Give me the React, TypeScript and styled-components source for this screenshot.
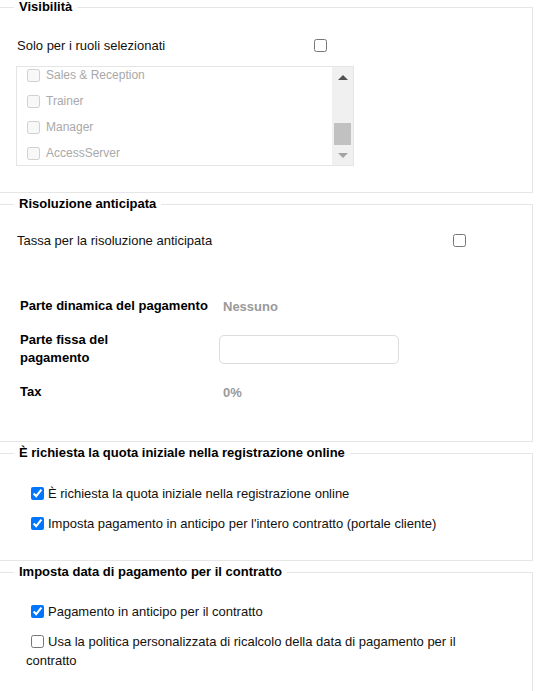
import React from "react"
import styled, { createGlobalStyle } from "styled-components"

const GlobalStyle = createGlobalStyle`
    html, body {
        margin: 0;
        padding: 0;
        background: #fff;
    }
    body {
        font-family: "Liberation Sans", Arial, sans-serif;
        font-size: 13px;
        color: #111;
    }
`

const Page = styled.div`
    width: 533px;
`

const Fieldset = styled.fieldset<{ $pb?: number }>`
    margin: 0 0 4px 0;
    padding: 0 0 ${p => p.$pb ?? 20}px 0;
    border: 1px solid #e6e6e6;
    border-left: none;
    min-width: 0;
`

const Legend = styled.legend`
    margin-left: 14px;
    padding: 0 5px;
    font-weight: bold;
    font-size: 13px;
    line-height: 14px;
    color: #000;
`

const Checkbox = styled.input.attrs({ type: "checkbox" })`
    width: 13px;
    height: 13px;
    margin: 0;
`

const ToggleRow = styled.div<{ $mt: number; $labelWidth: number }>`
    display: flex;
    align-items: center;
    height: 20px;
    margin-top: ${p => p.$mt}px;
    padding-left: 17px;

    & > span {
        width: ${p => p.$labelWidth}px;
        color: #111;
    }
`

const ListBox = styled.div`
    display: flex;
    margin: 11px 0 0 16px;
    width: 336px;
    height: 98px;
    border: 1px solid #e5e5e5;
    overflow: hidden;
`

const ListItems = styled.div`
    flex: 1;
    margin-top: -5px;
    padding-left: 10px;
`

const ListItem = styled.label`
    display: flex;
    align-items: center;
    gap: 6px;
    height: 26px;
    font-size: 12px;
    color: #a9a9a9;
`

const Scrollbar = styled.div`
    display: flex;
    flex-direction: column;
    width: 21px;
    background: #f0f0f0;
`

const ScrollButton = styled.div<{ $down?: boolean }>`
    height: 20px;
    display: flex;
    align-items: center;
    justify-content: center;

    &::before {
        content: "";
        width: 0;
        height: 0;
        border-left: 5px solid transparent;
        border-right: 5px solid transparent;
        ${p => p.$down
            ? "border-top: 5px solid #a3a3a3;"
            : "border-bottom: 5px solid #505050;"}
    }
`

const ScrollSpacer = styled.div`
    flex: 1;
`

const ScrollThumb = styled.div`
    height: 22px;
    margin: 0 2px;
    background: #c1c1c1;
`

const DetailGrid = styled.div`
    display: grid;
    grid-template-columns: 199px 180px;
    row-gap: 15px;
    align-items: center;
    margin-top: 46px;
    padding-left: 20px;
`

const DetailLabel = styled.div<{ $narrow?: boolean }>`
    min-height: 20px;
    display: flex;
    align-items: center;
    font-weight: bold;
    line-height: 18px;
    color: #000;
    max-width: ${p => (p.$narrow ? "125px" : "none")};
`

const DetailValue = styled.div`
    padding-left: 4px;
    font-weight: bold;
    color: #9a9a9a;
`

const TextInput = styled.input`
    box-sizing: border-box;
    width: 180px;
    height: 29px;
    border: 1px solid #dcdcdc;
    border-radius: 5px;
    outline: none;
`

const CheckList = styled.div<{ $mt: number }>`
    display: flex;
    flex-direction: column;
    gap: 11px;
    margin-top: ${p => p.$mt}px;
    padding-left: 26px;
    max-width: 464px;
`

const CheckLine = styled.label`
    display: block;
    line-height: 19px;
    color: #111;

    & > input {
        margin: 0 4px 0 5px;
        vertical-align: -2px;
    }
`

const roles = ["Sales & Reception", "Trainer", "Manager", "AccessServer"]

const App = () => {
    return <Page>
        <GlobalStyle />

        <Fieldset $pb={26}>
            <Legend>Visibilità</Legend>
            <ToggleRow $mt={21} $labelWidth={297}>
                <span>Solo per i ruoli selezionati</span>
                <Checkbox />
            </ToggleRow>
            <ListBox>
                <ListItems>
                    {roles.map(r => <ListItem key={r}>
                        <Checkbox disabled />
                        {r}
                    </ListItem>)}
                </ListItems>
                <Scrollbar>
                    <ScrollButton />
                    <ScrollSpacer />
                    <ScrollThumb />
                    <ScrollButton $down />
                </Scrollbar>
            </ListBox>
        </Fieldset>

        <Fieldset $pb={39}>
            <Legend>Risoluzione anticipata</Legend>
            <ToggleRow $mt={19} $labelWidth={436}>
                <span>Tassa per la risoluzione anticipata</span>
                <Checkbox />
            </ToggleRow>
            <DetailGrid>
                <DetailLabel>Parte dinamica del pagamento</DetailLabel>
                <DetailValue>Nessuno</DetailValue>
                <DetailLabel $narrow>Parte fissa del pagamento</DetailLabel>
                <div><TextInput /></div>
                <DetailLabel>Tax</DetailLabel>
                <DetailValue>0%</DetailValue>
            </DetailGrid>
        </Fieldset>

        <Fieldset $pb={27}>
            <Legend>È richiesta la quota iniziale nella registrazione online</Legend>
            <CheckList $mt={24}>
                <CheckLine><Checkbox defaultChecked />È richiesta la quota iniziale nella registrazione online</CheckLine>
                <CheckLine><Checkbox defaultChecked />Imposta pagamento in anticipo per l'intero contratto (portale cliente)</CheckLine>
            </CheckList>
        </Fieldset>

        <Fieldset $pb={24}>
            <Legend>Imposta data di pagamento per il contratto</Legend>
            <CheckList $mt={23}>
                <CheckLine><Checkbox defaultChecked />Pagamento in anticipo per il contratto</CheckLine>
                <CheckLine><Checkbox />Usa la politica personalizzata di ricalcolo della data di pagamento per il contratto</CheckLine>
            </CheckList>
        </Fieldset>
    </Page>
}

export default App
